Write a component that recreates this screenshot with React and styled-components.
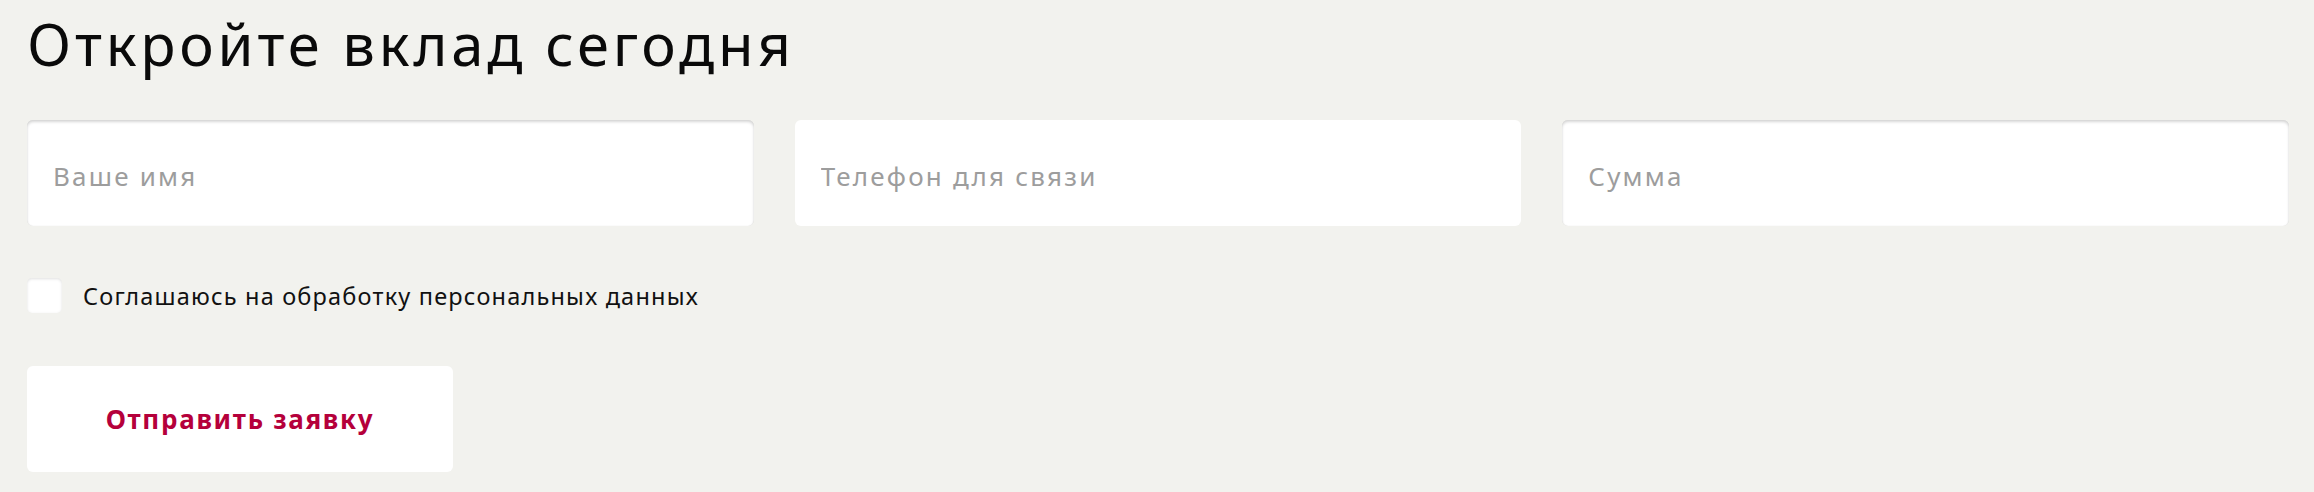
import React from 'react';
import styled, { createGlobalStyle } from 'styled-components';

const GlobalStyle = createGlobalStyle`
  html, body {
    margin: 0;
    padding: 0;
    background: #f2f2ee;
  }
  body {
    font-family: "Noto Sans", "Open Sans", sans-serif;
    color: #000;
  }
`;

const Page = styled.div`
  display: flex;
  flex-flow: column;
  align-items: flex-start;
  padding: 10px 25px 20px 27px;
`;

const Title = styled.h1`
  margin: 0;
  font-size: 58px;
  line-height: 68px;
  font-weight: 400;
  letter-spacing: 3.8px;
  color: #0a0a0a;
`;

const Fields = styled.div`
  align-self: stretch;
  display: grid;
  grid-template-columns: repeat(3, 1fr);
  gap: 41px;
  margin-top: 42px;
`;

const Field = styled.input`
  box-sizing: border-box;
  height: 106px;
  width: 100%;
  border: none;
  border-radius: 6px;
  background: #fff;
  padding: 6px 26px 0;
  font-family: inherit;
  font-size: 26px;
  letter-spacing: 2.2px;
  color: #222;
  outline: none;
  box-shadow: ${p => (p.$inset ? 'inset 0 2px 3px rgba(0,0,0,0.16), inset 0 0 1px rgba(0,0,0,0.12)' : 'none')};
  &::placeholder {
    color: #9d9d9d;
  }
`;

const Agree = styled.label`
  display: flex;
  align-items: center;
  gap: 21px;
  margin-top: 52px;
  font-size: 23.5px;
  letter-spacing: 1.2px;
  color: #111;
  cursor: pointer;
`;

const Box = styled.input`
  appearance: none;
  margin: 0;
  width: 35px;
  height: 35px;
  border-radius: 5px;
  background: #fff;
  box-shadow: inset 0 1px 3px rgba(0,0,0,0.12);
  cursor: pointer;
`;

const Submit = styled.button`
  margin-top: 53px;
  width: 426px;
  height: 106px;
  border: none;
  border-radius: 6px;
  background: #fff;
  font-family: inherit;
  font-size: 26px;
  font-weight: 700;
  letter-spacing: 1.7px;
  color: #b5003b;
  cursor: pointer;
`;

export default function App() {
  const [form, setForm] = React.useState({ name: '', phone: '', sum: '' });
  const [agree, setAgree] = React.useState(false);
  const set = key => e => setForm({ ...form, [key]: e.target.value });
  return (
    <>
      <GlobalStyle />
      <Page>
        <Title>Откройте вклад сегодня</Title>
        <Fields>
          <Field $inset type="text" placeholder="Ваше имя" value={form.name} onChange={set('name')} />
          <Field type="tel" placeholder="Телефон для связи" value={form.phone} onChange={set('phone')} />
          <Field $inset type="text" placeholder="Сумма" value={form.sum} onChange={set('sum')} />
        </Fields>
        <Agree>
          <Box type="checkbox" checked={agree} onChange={e => setAgree(e.target.checked)} />
          Соглашаюсь на обработку персональных данных
        </Agree>
        <Submit type="button">Отправить заявку</Submit>
      </Page>
    </>
  );
}
